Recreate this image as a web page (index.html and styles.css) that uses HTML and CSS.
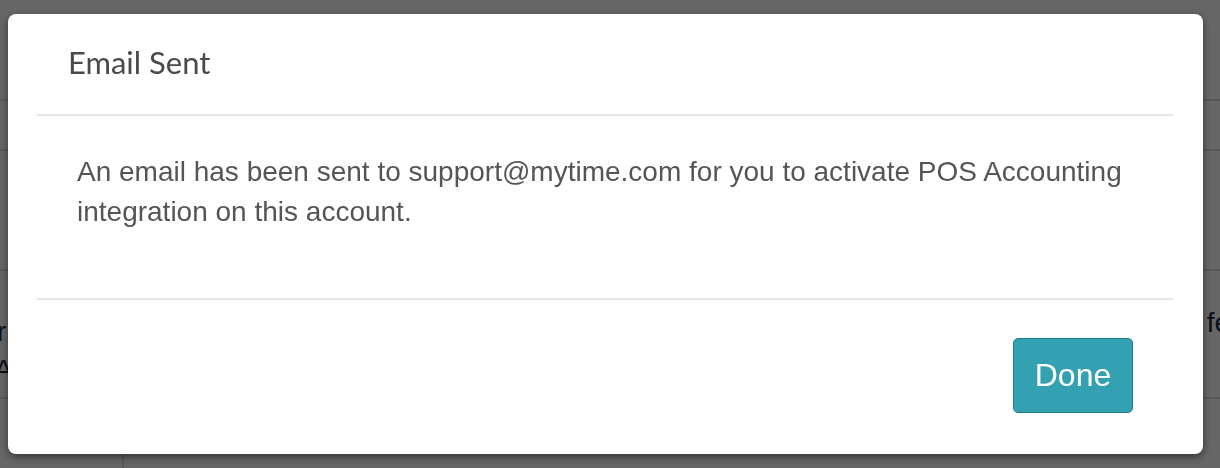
FILE: index.html
```html
<!DOCTYPE html>
<html>
<head>
<meta charset="utf-8">
<link rel="stylesheet" href="styles.css">
</head>
<body>
<div class="page">
  <div class="row r1"></div>
  <div class="row r2"></div>
  <div class="row r3"></div>
  <div class="row r4">
    <div class="frag-left"><span class="fl1">r</span><span class="fl2">A</span></div>
    <div class="frag-right">fe</div>
  </div>
  <div class="row r5"><div class="cell"></div></div>
</div>
<div class="backdrop"></div>
<div class="modal-wrap">
  <div class="modal">
    <div class="modal-header"><h4 class="title">Email Sent</h4></div>
    <div class="modal-body">
      <p>An email has been sent to support@mytime.com for you to activate POS Accounting integration on this account.</p>
    </div>
    <div class="modal-footer"><button class="btn">Done</button></div>
  </div>
</div>
</body>
</html>
```

FILE: styles.css
```css
html, body { margin: 0; padding: 0; }
body {
  width: 1220px;
  height: 468px;
  overflow: hidden;
  background: #fff;
  font-family: "Liberation Sans", Arial, sans-serif;
  color: #333;
}
.page { display: flex; flex-direction: column; }
.row { border-bottom: 2px solid #ddd; box-sizing: border-box; }
.r1 { height: 101px; }
.r2 { height: 50px; }
.r3 { height: 120px; }
.r4 { height: 128px; display: flex; justify-content: space-between; align-items: flex-start; }
.r5 { height: 70px; border-bottom: none; display: flex; }
.r5 .cell { width: 122px; border-right: 2px solid #ddd; }
.frag-left {
  margin-top: 42px;
  display: flex;
  flex-direction: column;
  font-size: 28px;
  line-height: 38px;
  color: #1a2c3c;
}
.fl1 { margin-left: -3px; }
.fl2 { margin-left: -6px; }
.frag-right { margin-top: 36px; margin-right: -10px; font-size: 28px; color: #1a2c3c; }
.backdrop {
  position: fixed;
  inset: 0;
  background: rgba(0, 0, 0, 0.6);
}
.modal-wrap {
  position: fixed;
  inset: 0;
  padding: 14px 17px 0 8px;
}
.modal {
  background: #fff;
  border-radius: 8px;
  height: 440px;
  box-shadow: 0 3px 9px rgba(0, 0, 0, 0.5);
  display: flex;
  flex-direction: column;
  padding: 0 30px 0 29px;
  box-sizing: border-box;
}
.modal-header {
  height: 100px;
  border-bottom: 2px solid #e5e5e5;
  padding-left: 31px;
  box-sizing: content-box;
}
.title {
  margin: 0;
  padding-top: 32px;
  font-family: Lato, "Open Sans", sans-serif;
  font-weight: 400;
  font-size: 31px;
  line-height: 32px;
  color: #4a4a4a;
}
.modal-body {
  height: 184px;
  border-bottom: 2px solid #e5e5e5;
  padding-left: 40px;
  padding-right: 40px;
  box-sizing: border-box;
}
.modal-body p {
  margin: 0;
  padding-top: 36px;
  font-size: 28px;
  line-height: 40px;
  color: #555;
}
.modal-footer {
  display: flex;
  justify-content: flex-end;
  padding: 38px 40px 0 0;
}
.btn {
  width: 120px;
  height: 75px;
  background: #34a1b3;
  border: 1px solid #1f7e8d;
  border-radius: 5px;
  color: #fff;
  font-family: "Liberation Sans", Arial, sans-serif;
  font-size: 32px;
  padding: 0;
}
```
